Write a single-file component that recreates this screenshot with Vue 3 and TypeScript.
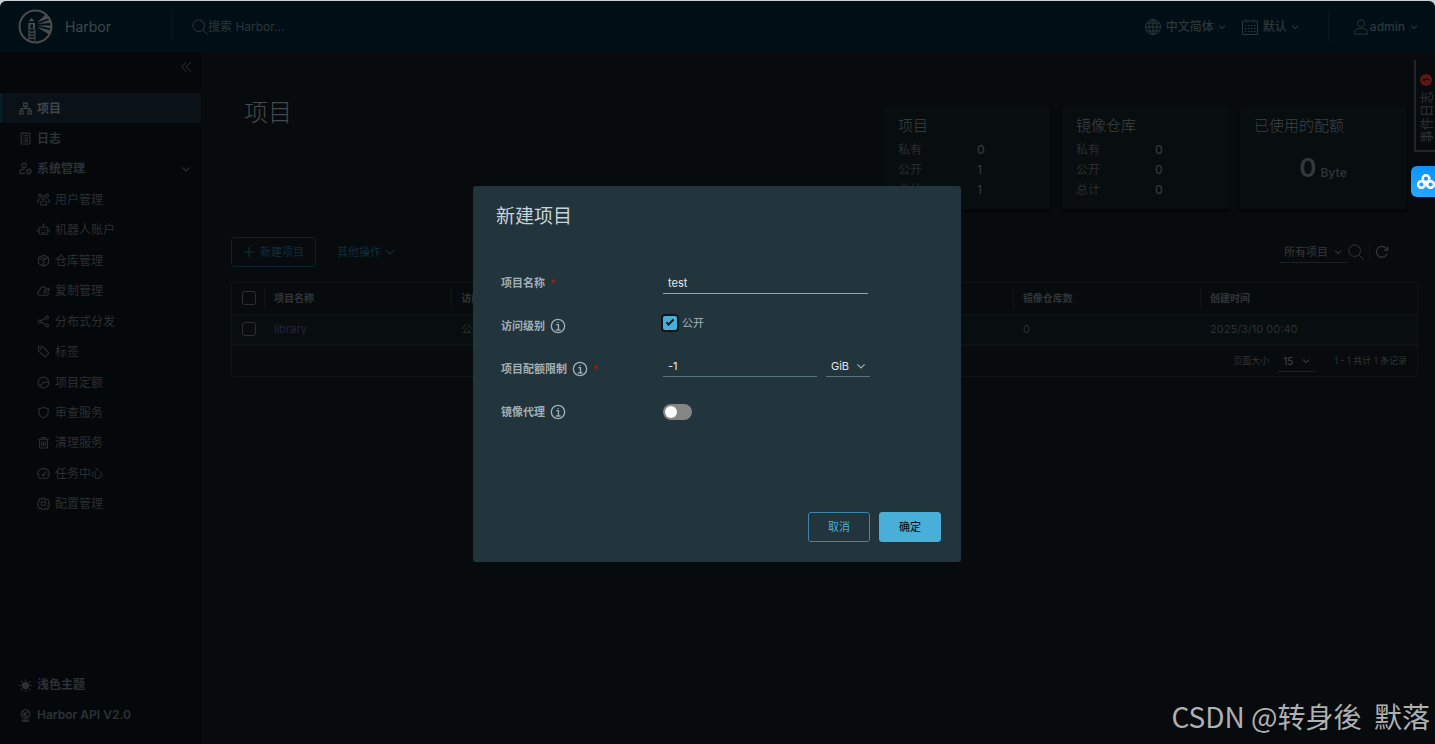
<script setup lang="ts">
import { h, ref, type FunctionalComponent } from 'vue'

const ring = (cx: number, cy: number, r: number): string =>
  `M${cx - r} ${cy}a${r} ${r} 0 1 0 ${2 * r} 0a${r} ${r} 0 1 0 ${-2 * r} 0z`

const icons: Record<string, string[]> = {
  search: [ring(15, 15, 13), 'M25 25l10 10'],
  angle: ['M5 12l13 13 13-13'],
  collapse: ['M18 4L5 18l13 14', 'M32 4L19 18l13 14'],
  organization: ['M13 3h10v9H13z', 'M2 24h9v9H2z', 'M25 24h9v9h-9z', 'M18 12v6', 'M6 24v-6h24v6'],
  log: ['M8 3h20a2 2 0 0 1 2 2v26a2 2 0 0 1-2 2H8a2 2 0 0 1-2-2V5a2 2 0 0 1 2-2z', 'M15 10h10', 'M15 16h10', 'M15 22h10', 'M15 27h10', 'M10 10h2', 'M10 16h2', 'M10 22h2', 'M10 27h2'],
  admin: [ring(14, 9, 6), 'M17 32H2v-6c3-5 8-7 14-7', ring(27, 26, 5), 'M27 17v4', 'M27 31v4', 'M18 26h4', 'M32 26h4', 'M21 20l2 2', 'M31 30l2 2', 'M33 20l-2 2', 'M23 30l-2 2'],
  users: [ring(18, 13, 5), ring(8, 7, 4), ring(28, 7, 4), 'M10 33v-8c4-4 12-4 16 0v8z', 'M9 16c-4 0-6 2-7 4v5h4', 'M27 16c4 0 6 2 7 4v5h-4'],
  robot: ['M9 11h18a3 3 0 0 1 3 3v14a3 3 0 0 1-3 3H9a3 3 0 0 1-3-3V14a3 3 0 0 1 3-3z', 'M18 11V5', ring(18, 4, 1), 'M2 18v7', 'M34 18v7', 'M13 17v3', 'M23 17v3', 'M13 26h10'],
  cube: ['M18 3l14 7v16l-14 8-14-8V10z', 'M4 10l14 7 14-7', 'M18 17v17', 'M11 7l14 7'],
  cloud: ['M25 31H9c-9 0-9-12-1-13 0-11 14-14 19-4', 'M30 22c3 5 1 9-5 9', 'M34 15H20', 'M30 10l5 5-5 5', 'M20 22h8', 'M23 18l-4 4 4 4'],
  share: [ring(7, 18, 4), ring(28, 7, 4), ring(28, 29, 4), 'M11 16l13-7', 'M11 20l13 7'],
  tag: ['M4 5h12l17 17-11 11L4 16z', ring(10, 11, 1)],
  quota: [ring(18, 18, 15), 'M32 17H20L8 28'],
  shield: ['M18 3c4 3 8 4 13 4v11c0 7-6 12-13 15C11 30 5 25 5 18V7c5 0 9-1 13-4z'],
  trash: ['M3 9h30', 'M7 9v22a2 2 0 0 0 2 2h18a2 2 0 0 0 2-2V9', 'M13 9V4h10v5', 'M13 15v13', 'M18 15v13', 'M23 15v13'],
  gauge: ['M7 31a16 16 0 1 1 22 0z', 'M17 23l9-11', 'M18 5v4', 'M4 20h4', 'M28 20h4', ring(17, 23, 2)],
  cog: ['M15 3h6l1 4 3 1 4-2 4 4-2 4 1 3 3 1v5l-4 1-1 3 2 4-4 3-4-2-3 1-1 3h-5l-1-4-3-1-4 2-4-4 2-4-1-3-3-1v-5l4-1 1-3-2-4 4-4 4 2 2-1z', ring(18, 18, 6)],
  world: [ring(18, 14, 12), 'M10 6l5 6 8-2 4-5', 'M7 17l7-2 5 10', 'M15 13l11 9', 'M7 31h22', 'M10 35h16'],
  globe: [ring(18, 18, 15), 'M18 3v30', 'M3 18h30', 'M6 10h24', 'M6 26h24', 'M18 3c-11 8-11 22 0 30', 'M18 3c11 8 11 22 0 30'],
  calendar: ['M8 6H3v27h30V6h-5', 'M12 6h12', 'M10 2v7', 'M26 2v7', 'M8 15h3', 'M14 15h3', 'M20 15h3', 'M26 15h3', 'M8 21h3', 'M14 21h3', 'M20 21h3', 'M26 21h3', 'M8 27h3', 'M14 27h3', 'M20 27h3', 'M26 27h3'],
  user: [ring(18, 10, 8), 'M3 34v-6c4-9 26-9 30 0v6z'],
  plus: ['M18 2v32', 'M2 18h32'],
  refresh: ['M31 22a14 14 0 1 1-3-14l4 4', 'M33 3v10H23'],
  info: [ring(18, 18, 15), 'M14 15h5v12', 'M13 27h11', 'M18 9v2'],
}

const Icon: FunctionalComponent<{ name: string }> = (props) =>
  h('svg', { viewBox: '0 0 36 36', 'aria-hidden': 'true' }, icons[props.name].map((d) => h('path', { d })))
Icon.props = ['name']

interface NavItem { label: string; icon: string; kind?: 'active' | 'sub' | 'group' }
const nav: NavItem[] = [
  { label: '项目', icon: 'organization', kind: 'active' },
  { label: '日志', icon: 'log' },
  { label: '系统管理', icon: 'admin', kind: 'group' },
  { label: '用户管理', icon: 'users', kind: 'sub' },
  { label: '机器人账户', icon: 'robot', kind: 'sub' },
  { label: '仓库管理', icon: 'cube', kind: 'sub' },
  { label: '复制管理', icon: 'cloud', kind: 'sub' },
  { label: '分布式分发', icon: 'share', kind: 'sub' },
  { label: '标签', icon: 'tag', kind: 'sub' },
  { label: '项目定额', icon: 'quota', kind: 'sub' },
  { label: '审查服务', icon: 'shield', kind: 'sub' },
  { label: '清理服务', icon: 'trash', kind: 'sub' },
  { label: '任务中心', icon: 'gauge', kind: 'sub' },
  { label: '配置管理', icon: 'cog', kind: 'sub' },
]

const stats = [
  { title: '项目', rows: [['私有', 0], ['公开', 1], ['总计', 1]] },
  { title: '镜像仓库', rows: [['私有', 0], ['公开', 0], ['总计', 0]] },
]

const columns = ['项目名称', '访问级别', '', '', '镜像仓库数', '创建时间']

const projectName = ref('test')
const isPublic = ref(true)
const quota = ref('-1')
const unit = ref('GiB')
const proxy = ref(false)
</script>

<template>
  <div class="page">
    <header class="header">
      <a class="brand" href="#">
        <svg class="logo" viewBox="0 0 34 34" aria-hidden="true">
          <circle class="logo-ring" cx="17" cy="17" r="15.5" />
          <path class="logo-fill" d="M10 13.500h6.500V20H10zM10.500 12l2.700-3.500L16 12zM18.500 13L27 5l3 4zM18.500 14.500L31 10.500l1 3zM18.500 16h14v3zM18.500 17.500L32 21l-1.500 4z" />
          <path class="logo-hole" d="M12 15h2.500v4H12z" />
          <path class="logo-stripe" d="M10 21.500l7 2M10 24.500l7 2M10 27.500l7 2M17 21.500l-7 2M17 24.500l-7 2M17 27.500l-7 2M10.500 20v11M16.500 20v11" />
        </svg>
        <span>Harbor</span>
      </a>
      <label class="search">
        <Icon name="search" class="icon i16 thin" />
        <input type="search" placeholder="搜索 Harbor..." aria-label="搜索 Harbor" />
      </label>
      <div class="header-actions">
        <button type="button" class="menu"><Icon name="globe" class="icon i18" />中文简体<Icon name="angle" class="icon i8" /></button>
        <button type="button" class="menu"><Icon name="calendar" class="icon i18" />默认<Icon name="angle" class="icon i8" /></button>
        <button type="button" class="menu account"><Icon name="user" class="icon i16 thin" />admin<Icon name="angle" class="icon i8" /></button>
      </div>
    </header>

    <div class="body">
      <aside class="sidebar">
        <div class="collapse-row">
          <button type="button" aria-label="收起"><Icon name="collapse" class="icon i12" /></button>
        </div>
        <nav class="nav">
          <a v-for="item in nav" :key="item.label" href="#" class="nav-item" :class="item.kind">
            <Icon :name="item.icon" class="icon i13" />
            <span>{{ item.label }}</span>
            <Icon v-if="item.kind === 'group'" name="angle" class="icon i10 caret" />
          </a>
        </nav>
        <div class="side-foot">
          <button type="button" class="nav-item">
            <svg class="icon i13" viewBox="0 0 36 36" aria-hidden="true">
              <circle class="sun" cx="18" cy="18" r="10" />
              <path d="M18 1v5M18 30v5M1 18h5M30 18h5M5 5l4 4M27 27l4 4M31 5l-4 4M9 27l-4 4" />
            </svg>
            <span>浅色主题</span>
          </button>
          <a href="#" class="nav-item"><Icon name="world" class="icon i13" /><span>Harbor API V2.0</span></a>
        </div>
      </aside>

      <main class="main">
        <section class="summary">
          <h1>项目</h1>
          <div class="cards">
            <article v-for="card in stats" :key="card.title" class="card">
              <h2>{{ card.title }}</h2>
              <dl>
                <template v-for="row in card.rows" :key="row[0]">
                  <dt>{{ row[0] }}</dt>
                  <dd>{{ row[1] }}</dd>
                </template>
              </dl>
            </article>
            <article class="card">
              <h2>已使用的配额</h2>
              <p class="used"><strong>0</strong><span>Byte</span></p>
            </article>
          </div>
        </section>

        <div class="toolbar">
          <button type="button" class="btn-new"><Icon name="plus" class="icon i12" />新建项目</button>
          <button type="button" class="btn-more">其他操作<Icon name="angle" class="icon i10" /></button>
          <div class="filters">
            <span class="select filter">
              <select aria-label="项目筛选"><option>所有项目</option></select>
              <Icon name="angle" class="icon i8" />
            </span>
            <button type="button" aria-label="搜索"><Icon name="search" class="icon i16 thin" /></button>
            <button type="button" class="reload" aria-label="刷新"><Icon name="refresh" class="icon i14" /></button>
          </div>
        </div>

        <div class="grid">
          <table>
            <thead>
              <tr>
                <th class="pick"><input type="checkbox" aria-label="全选" /></th>
                <th v-for="(c, i) in columns" :key="i">{{ c }}</th>
              </tr>
            </thead>
            <tbody>
              <tr>
                <td class="pick"><input type="checkbox" aria-label="选择 library" /></td>
                <td><a href="#">library</a></td>
                <td>公开</td>
                <td></td>
                <td></td>
                <td>0</td>
                <td>2025/3/10 00:40</td>
              </tr>
            </tbody>
          </table>
          <footer class="pager">
            <label for="page-size">页面大小</label>
            <span class="select size">
              <select id="page-size"><option>15</option></select>
              <Icon name="angle" class="icon i8" />
            </span>
            <span class="range">1 - 1 共计 1 条记录</span>
          </footer>
        </div>
      </main>
    </div>

    <button type="button" class="events"><span class="badge">1</span><span class="events-text">事件日志</span></button>
    <button type="button" class="cloud-disk" aria-label="网盘">
      <svg viewBox="0 0 24 24" aria-hidden="true">
        <circle cx="12" cy="8" r="4" /><circle cx="6.500" cy="15" r="4" /><circle cx="17.500" cy="15" r="4" />
        <path d="M9.500 12l5.500 6" />
      </svg>
    </button>

    <div class="overlay">
      <form class="dialog" role="dialog" aria-labelledby="dialog-title" @submit.prevent>
        <h2 id="dialog-title">新建项目</h2>
        <div class="fields">
          <div class="field">
            <label class="name" for="p-name">项目名称<i>*</i></label>
            <input id="p-name" v-model="projectName" class="line strong" type="text" />
          </div>
          <div class="field">
            <span class="name">访问级别<Icon name="info" class="icon i16" /></span>
            <label class="check"><input v-model="isPublic" type="checkbox" /><span>公开</span></label>
          </div>
          <div class="field">
            <label class="name" for="p-quota">项目配额限制<Icon name="info" class="icon i16" /><i>*</i></label>
            <div class="quota">
              <input id="p-quota" v-model="quota" class="line" type="text" />
              <span class="select unit">
                <select v-model="unit" aria-label="配额单位"><option>GiB</option></select>
                <Icon name="angle" class="icon i10" />
              </span>
            </div>
          </div>
          <div class="field">
            <label class="name" for="p-proxy">镜像代理<Icon name="info" class="icon i16" /></label>
            <input id="p-proxy" v-model="proxy" class="toggle" type="checkbox" role="switch" />
          </div>
        </div>
        <div class="actions">
          <button type="button" class="cancel">取消</button>
          <button type="submit" class="ok">确定</button>
        </div>
      </form>
    </div>

    <div class="signature">CSDN @转身後&nbsp; 默落</div>
  </div>
</template>

<style>
body {
  margin: 0;
  background: #c9d2d6;
}
</style>

<style scoped>
.page {
  position: relative;
  box-sizing: border-box;
  min-height: 100vh;
  padding-top: 1px;
  display: flex;
  flex-direction: column;
  overflow: hidden;
  color: #2d3235;
  font: 12px/16px Inter, "Noto Sans CJK SC", sans-serif;
}
.page *, .page *::before, .page *::after { box-sizing: border-box; }
button, input, select {
  margin: 0;
  padding: 0;
  border: 0;
  background: none;
  color: inherit;
  font: inherit;
  appearance: none;
  outline: none;
}
button { display: inline-flex; align-items: center; cursor: pointer; white-space: nowrap; }
a { color: inherit; text-decoration: none; }
h1, h2, p, dl, dd { margin: 0; font-weight: 400; }

.icon { flex: none; fill: none; stroke: currentColor; stroke-width: 2; }
.i8 { width: 8px; height: 8px; stroke-width: 5; }
.i10 { width: 10px; height: 10px; stroke-width: 4; }
.i12 { width: 12px; height: 12px; stroke-width: 3; }
.i13 { width: 13px; height: 13px; stroke-width: 3; }
.i14 { width: 14px; height: 14px; stroke-width: 3; }
.i16 { width: 16px; height: 16px; stroke-width: 3; }
.i18 { width: 18px; height: 18px; }
.thin { stroke-width: 2; }

.header {
  display: flex;
  align-items: center;
  height: 51px;
  background: #000e15;
  border-radius: 6px 6px 0 0;
}
.brand {
  display: flex;
  align-items: center;
  gap: 12px;
  width: 171px;
  padding-left: 18px;
  font-size: 14px;
  color: #40484b;
}
.logo { width: 35px; height: 35px; }
.logo-ring { fill: none; stroke: #484c4e; stroke-width: 2; }
.logo-fill { fill: #484c4e; }
.logo-hole { fill: #000e15; }
.logo-stripe { fill: none; stroke: #484c4e; stroke-width: 1; }
.search {
  display: flex;
  align-items: center;
  flex: 1;
  height: 33px;
  padding-left: 20px;
  border-left: 1px solid #07171e;
  color: #333e42;
}
.search input { width: 200px; }
.search input::placeholder { color: #2b363a; opacity: 1; }
.header-actions { display: flex; align-items: center; color: #2c373b; }
.menu { gap: 4px; margin-right: 15px; font-weight: 500; }
.account { height: 33px; margin: 0 17px 0 14px; padding-left: 24px; border-left: 1px solid #07171e; gap: 1px; }
.account .i8 { margin-left: 4px; }

.body { display: flex; flex: 1; background: #070b0e; }
.sidebar {
  display: flex;
  flex-direction: column;
  width: 201px;
  background: #04080b;
}
.collapse-row {
  display: flex;
  justify-content: flex-end;
  height: 31px;
  margin-bottom: 10px;
  padding-right: 9px;
  border-bottom: 1px solid #070c0f;
}
.nav { display: flex; flex-direction: column; justify-content: space-between; min-height: 426px; }
.nav-item {
  display: flex;
  align-items: center;
  gap: 5px;
  height: 30px;
  padding: 0 10px 0 19px;
  color: #2d3234;
  font-weight: 700;
}
.nav-item.active {
  padding-left: 17px;
  border-left: 2px solid #01202c;
  border-radius: 0 4px 4px 0;
  background: #0b1217;
  color: #404548;
}
.nav-item.sub { padding-left: 37px; font-weight: 400; color: #2b2f31; }
.nav span { padding-top: 1px; }
.caret { margin-left: auto; }
.side-foot { display: flex; flex-direction: column; margin-top: auto; padding-bottom: 14px; }
.side-foot .nav-item { font-weight: 600; }
.sun { fill: currentColor; stroke: none; }

.main { flex: 1; min-width: 0; padding: 0 17px 0 30px; }
.summary { display: flex; justify-content: space-between; padding: 52px 11px 0 13px; }
h1 { padding-top: 1px; font-size: 24px; line-height: 16px; font-weight: 300; color: #464a4c; }
.cards { display: flex; gap: 10px; }
.card {
  width: 168px;
  height: 106px;
  padding: 12px 14px;
  border: 1px solid #05090b;
  border-radius: 3px;
  background: #080d0f;
  box-shadow: 0 2px 1px #030607;
}
.card h2 { font-size: 15px; line-height: 18px; font-weight: 300; color: #3f4345; }
.card dl { display: grid; grid-template-columns: 79px 1fr; row-gap: 4px; margin-top: 7px; }
.card dt { color: #2a2e30; }
.card dd { font-weight: 500; color: #34383a; }
.used { display: flex; align-items: baseline; justify-content: center; gap: 4px; margin-top: 19px; font-weight: 600; }
.used strong { font-size: 26px; line-height: 28px; font-weight: 600; color: #34383a; }

.toolbar { display: flex; align-items: center; height: 30px; margin: 27px 0 15px; font-size: 11px; color: #122e39; }
.btn-new { gap: 5px; height: 30px; padding: 0 11px; border: 1px solid #0d232c; border-radius: 3px; }
.btn-more { gap: 4px; margin-left: 21px; }
.filters { display: flex; align-items: center; margin-left: auto; padding-right: 29px; color: #34393b; }
.reload { height: 20px; margin-left: 5px; padding-left: 5px; border-left: 1px solid #0d1214; }
.select { display: inline-flex; align-items: center; border-bottom: 1px solid #1b2022; }
.select select { flex: 1; min-width: 0; width: 100%; padding-right: 14px; }
.select .icon { flex: none; margin-left: -14px; pointer-events: none; }
.filter { width: 67px; height: 21px; margin-right: 1px; padding: 0 5px 0 4px; }
.filter select { padding-right: 0; margin-right: 4px; }

.grid { border: 1px solid #0e1315; border-radius: 3px; }
table { width: 100%; border-collapse: collapse; table-layout: fixed; }
th, td { height: 31px; padding: 0 0 0 10px; text-align: left; }
th { position: relative; width: 15.8%; font-size: 10px; font-weight: 700; color: #323638; }
th:last-child { width: auto; }
th + th::before {
  content: "";
  position: absolute;
  left: 0;
  top: 5px;
  width: 1px;
  height: 21px;
  background: #101517;
}
td { border-top: 1px solid #0e1315; border-bottom: 2px solid #0d1214; background: #080d0f; color: #2d3133; font-size: 11px; }
td a { color: #23253a; font-size: 11px; }
th.pick { width: 32px; }
.pick input { display: block; width: 14px; height: 14px; border: 1px solid #2b2f31; border-radius: 3px; }
.pager { display: flex; align-items: center; justify-content: flex-end; height: 30px; padding-right: 10px; font-size: 9px; color: #303436; }
.size { width: 37px; height: 22px; margin: 0 19px 0 9px; padding: 0 5px; font-size: 10px; font-weight: 500; color: #3b3f41; }

.events {
  position: absolute;
  right: 0;
  top: 60px;
  flex-direction: column;
  justify-content: flex-end;
  gap: 5px;
  width: 21px;
  height: 92px;
  padding-bottom: 7px;
  border: solid #222628;
  border-width: 0 0 2px 2px;
  color: #2d3234;
  font-size: 13px;
}
.events-text { flex: none; writing-mode: vertical-rl; text-orientation: sideways; transform: rotate(180deg); }
.badge {
  flex: none;
  width: 12px;
  height: 12px;
  border-radius: 50%;
  background: #5a1713;
  color: #090305;
  font-size: 8px;
  line-height: 12px;
  font-weight: 700;
  text-align: center;
  transform: rotate(-90deg);
}
.cloud-disk {
  position: absolute;
  right: 0;
  top: 166px;
  width: 24px;
  height: 31px;
  padding-left: 5px;
  border-radius: 6px 0 0 6px;
  background: linear-gradient(20deg, #29abff, #0890fb);
  overflow: hidden;
}
.cloud-disk svg { flex: none; width: 20px; height: 20px; fill: none; stroke: #fff; stroke-width: 3; }

.overlay {
  position: absolute;
  inset: 0;
  display: flex;
  align-items: center;
  justify-content: center;
  padding: 3px 1px 0 0;
}
.dialog {
  width: 488px;
  padding: 20px 20px 20px 23px;
  border-radius: 3px;
  background: #22343c;
  color: #a5b3b9;
  font-size: 11px;
}
.dialog h2 { font-size: 19px; line-height: 22px; color: #c9d2d6; }
.fields { display: grid; margin: 34px 0 78px; padding-left: 5px; }
.field { display: grid; grid-template-columns: 162px 1fr; align-items: center; height: 43px; }
.name { display: flex; align-items: center; font-weight: 700; color: #a0afb6; }
.name .icon { margin-left: 5px; }
.name i { margin-left: 5px; color: #a32100; font-style: normal; font-weight: 400; }
.line { width: 205px; height: 22px; padding: 0 5px; border-bottom: 1px solid #5b737b; color: #e6ecef; }
.line.strong { border-color: #8fa6ab; }
.check { display: flex; align-items: center; gap: 5px; padding-bottom: 6px; }
.check input {
  display: grid;
  place-items: center;
  width: 14px;
  height: 14px;
  border-radius: 2px;
  background: #49afd9;
  box-shadow: 0 0 0 2px #10161a;
}
.check input:checked::before {
  content: "";
  width: 8px;
  height: 4px;
  border: solid #0b151a;
  border-width: 0 0 2px 2px;
  transform: rotate(-45deg) translate(1px, -1px);
}
.quota { display: flex; gap: 9px; padding-bottom: 6px; }
.quota .line { width: 154px; }
.unit { width: 44px; padding: 0 4px 0 5px; border-color: #5b737b; color: #e0e7ea; }
.unit .icon { color: #a5b3b9; }
.toggle { display: flex; align-items: center; width: 29px; height: 16px; padding: 0 2px; border-radius: 8px; background: #858585; }
.toggle::before { content: ""; width: 12px; height: 12px; border-radius: 50%; background: #fafafa; }
.toggle:checked { justify-content: flex-end; background: #49afd9; }
.actions { display: flex; justify-content: flex-end; gap: 9px; }
.actions button { justify-content: center; width: 62px; height: 30px; border: 1px solid #3c87a6; border-radius: 3px; color: #49afd9; }
.actions .ok { border-color: #49afd9; background: #49afd9; color: #0b1c24; font-weight: 500; }

.signature {
  position: absolute;
  right: 5px;
  bottom: 10px;
  color: #aeb0b1;
  font: 400 28px/36px "Noto Sans CJK SC", sans-serif;
  white-space: nowrap;
}
</style>
